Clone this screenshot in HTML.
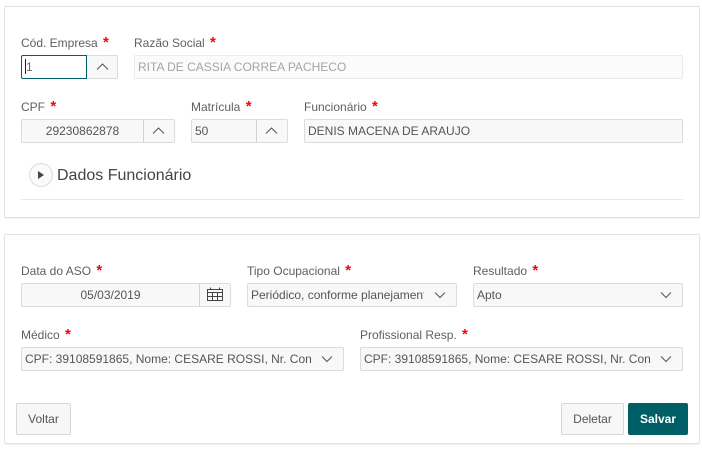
<!DOCTYPE html>
<html><head><meta charset="utf-8">
<style>
html,body{margin:0;padding:0;background:#fff}
body{width:702px;height:453px;position:relative;overflow:hidden;font-family:"Liberation Sans",sans-serif;font-size:12px;color:#555}
div,span{box-sizing:border-box;position:absolute}
.panel{background:#fff;border:1px solid #e3e3e3;border-radius:2px;box-shadow:0 1px 1px rgba(0,0,0,.05)}
.lb{white-space:nowrap;line-height:14px;color:#5f5f5f}
.lb b{position:static;color:#f00;font-weight:bold;font-size:15px;line-height:14px;margin-left:2px}
.f{background:#f8f8f8;border:1px solid #dcdcdc;border-radius:2px;height:24px;line-height:23px;white-space:nowrap;overflow:hidden;padding-left:3px;color:#555}
.d{position:absolute;top:0;height:22px;border-left:1px solid #d2d2d2}
.btn{border:1px solid #d8d8d8;background:#f7f7f7;border-radius:2px;height:32px;line-height:31px;text-align:center;color:#555}
svg{position:absolute;fill:none}
</style></head><body>

<div class="panel" style="left:4px;top:6px;width:696px;height:212px"></div>
<div class="panel" style="left:4px;top:234px;width:696px;height:210px"></div>

<div class="lb" style="left:21px;top:36px">Cód. Empresa <b>*</b></div>
<div class="f" style="left:21px;top:55px;width:97px"></div>
<div style="left:21px;top:55px;width:66px;height:24px;background:#fff;border:1px solid #005f66;border-radius:2px 0 0 2px;line-height:23px;padding-left:4px;color:#666">1</div>
<div style="left:25px;top:59px;width:1px;height:15px;background:#222"></div>
<svg style="left:96px;top:62px" width="13" height="9"><path d="M1 7.5L6.5 2L12 7.5" stroke="#555" stroke-width="1"/></svg>

<div class="lb" style="left:134px;top:36px">Razão Social <b>*</b></div>
<div class="f" style="left:134px;top:55px;width:549px;background:#fbfbfb;border-color:#eaeaea;color:#a5a5a5">RITA DE CASSIA CORREA PACHECO</div>

<div class="lb" style="left:21px;top:100px">CPF <b>*</b></div>
<div class="f" style="left:21px;top:119px;width:154px;padding:0"><span style="left:0;width:121px;text-align:center">29230862878</span><span class="d" style="left:121px"></span></div>
<svg style="left:152px;top:126px" width="13" height="9"><path d="M1 7.5L6.5 2L12 7.5" stroke="#555" stroke-width="1"/></svg>

<div class="lb" style="left:191px;top:100px">Matrícula <b>*</b></div>
<div class="f" style="left:191px;top:119px;width:97px">50<span class="d" style="left:64px"></span></div>
<svg style="left:265px;top:126px" width="13" height="9"><path d="M1 7.5L6.5 2L12 7.5" stroke="#555" stroke-width="1"/></svg>

<div class="lb" style="left:304px;top:100px">Funcionário <b>*</b></div>
<div class="f" style="left:304px;top:119px;width:379px">DENIS MACENA DE ARAUJO</div>

<div style="left:29px;top:163px;width:24px;height:24px;border:1px solid #dcdcdc;border-radius:50%;background:#fafafa"></div>
<svg style="left:37px;top:170px" width="8" height="10"><path d="M1 1L7 5L1 9Z" fill="#444"/></svg>
<div style="left:57px;top:165px;font-size:16px;line-height:21px;color:#444;white-space:nowrap">Dados Funcionário</div>
<div style="left:21px;top:199px;width:662px;height:1px;background:#e8e8e8"></div>

<div class="lb" style="left:21px;top:264px">Data do ASO <b>*</b></div>
<div class="f" style="left:21px;top:283px;width:210px;padding:0"><span style="left:0;width:177px;text-align:center">05/03/2019</span><span class="d" style="left:177px"></span></div>
<svg style="left:207px;top:287px" width="16" height="15"><path d="M.5 2.5H15.5V13.5H.5ZM.5 5.5H15.5M.5 9.5H15.5M5.5 5.5V13.5M10.5 5.5V13.5M3.5 .5V2.5M12.5 .5V2.5" stroke="#444" stroke-width="1"/></svg>

<div class="lb" style="left:247px;top:264px">Tipo Ocupacional <b>*</b></div>
<div class="f" style="left:247px;top:283px;width:210px"><span style="left:3px;top:0;width:173px;overflow:hidden">Periódico, conforme planejamento</span></div>
<svg style="left:434px;top:291px" width="12" height="8"><path d="M1 1.5L6 6.5L11 1.5" stroke="#555" stroke-width="1"/></svg>

<div class="lb" style="left:473px;top:264px">Resultado <b>*</b></div>
<div class="f" style="left:473px;top:283px;width:210px">Apto</div>
<svg style="left:660px;top:291px" width="12" height="8"><path d="M1 1.5L6 6.5L11 1.5" stroke="#555" stroke-width="1"/></svg>

<div class="lb" style="left:21px;top:328px">Médico <b>*</b></div>
<div class="f" style="left:21px;top:347px;width:323px"><span style="left:3px;top:0;width:287px;overflow:hidden">CPF: 39108591865, Nome: CESARE ROSSI, Nr. Conselho</span></div>
<svg style="left:321px;top:355px" width="12" height="8"><path d="M1 1.5L6 6.5L11 1.5" stroke="#555" stroke-width="1"/></svg>

<div class="lb" style="left:360px;top:328px">Profissional Resp. <b>*</b></div>
<div class="f" style="left:360px;top:347px;width:323px"><span style="left:3px;top:0;width:287px;overflow:hidden">CPF: 39108591865, Nome: CESARE ROSSI, Nr. Conselho</span></div>
<svg style="left:660px;top:355px" width="12" height="8"><path d="M1 1.5L6 6.5L11 1.5" stroke="#555" stroke-width="1"/></svg>

<div class="btn" style="left:16px;top:403px;width:55px">Voltar</div>
<div class="btn" style="left:561px;top:403px;width:63px">Deletar</div>
<div class="btn" style="left:628px;top:403px;width:60px;background:#005f66;border-color:#005f66;color:#fff;font-weight:bold">Salvar</div>

</body></html>
